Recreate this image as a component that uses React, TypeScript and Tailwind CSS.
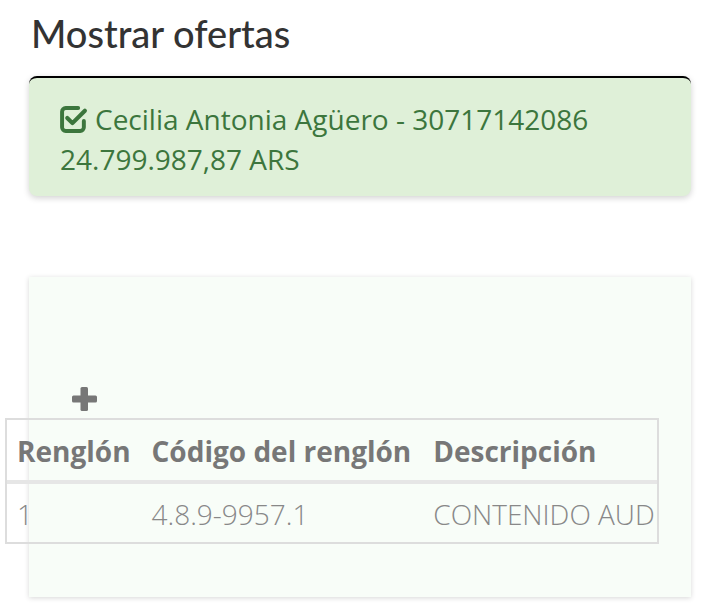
import React from 'react';

function CheckSquareIcon() {
    return (
        <svg width="28" height="27" viewBox="0 0 27 26" className="shrink-0" fill="none">
            <path
                d="M23 14.5v6a3.5 3.5 0 0 1-3.5 3.5H5.5A3.5 3.5 0 0 1 2 20.5V5.5A3.5 3.5 0 0 1 5.5 2h12"
                stroke="#3c763d"
                strokeWidth="3.8"
                strokeLinecap="round"
            />
            <path d="M7 11.5l5 5 12-12" stroke="#3c763d" strokeWidth="4" strokeLinecap="round" strokeLinejoin="round" />
        </svg>
    );
}

function PlusIcon() {
    return (
        <svg width="27" height="24" viewBox="0 0 27 24" fill="#777777">
            <rect x="2" y="8.5" width="25" height="7" rx="1.5" />
            <rect x="10.5" y="0" width="7.5" height="24" rx="1.5" />
        </svg>
    );
}

const rows = [{ renglon: '1', codigo: '4.8.9-9957.1', descripcion: 'CONTENIDO AUDIOVISUAL' }];

export default function App() {
    return (
        <div className="min-h-[603px] bg-white px-[29px] pt-[6px] pb-[6px]" style={{ fontFamily: '"Open Sans", sans-serif' }}>
            <h3
                className="pl-[2px] text-[38px] leading-[54px] font-medium text-[#333333]"
                style={{ fontFamily: 'Lato, "Open Sans", sans-serif' }}
            >
                Mostrar ofertas
            </h3>

            <div className="mt-[16px] rounded-lg border-t-2 border-black bg-[#dff0d8] pl-[31px] pr-[20px] pt-[21px] pb-[17px] text-[28px] leading-[40px] text-[#3c763d] shadow-[0_2px_6px_rgba(0,0,0,0.18)]">
                <div className="flex items-center gap-[7px]">
                    <CheckSquareIcon />
                    <span>Cecilia Antonia Agüero - 30717142086</span>
                </div>
                <div>24.799.987,87 ARS</div>
            </div>

            <div className="mt-[81px] h-[320px] bg-[#f8fdf8] pt-[110px] shadow-[0_1px_5px_rgba(0,0,0,0.16)]">
                <div className="pl-[41px]">
                    <PlusIcon />
                </div>
                <div className="-ml-[24px] mt-[7px] w-[654px] overflow-hidden border-2 border-[#dddddd]">
                    <table className="border-collapse whitespace-nowrap text-left">
                        <thead>
                            <tr className="border-b-4 border-[#e6e6e6]">
                                <th className="px-[10px] pt-[11px] pb-[9px] text-[28px] leading-[40px] font-bold text-[#777777]">Renglón</th>
                                <th className="px-[11px] pt-[11px] pb-[9px] text-[28px] leading-[40px] font-bold text-[#777777]">Código del renglón</th>
                                <th className="px-[11px] pt-[11px] pb-[9px] text-[28px] leading-[40px] font-bold text-[#777777]">Descripción</th>
                            </tr>
                        </thead>
                        <tbody>
                            {rows.map((r) => (
                                <tr key={r.codigo}>
                                    <td className="px-[10px] pt-[10px] pb-[8px] text-[28px] leading-[40px] font-light text-[#888888]">{r.renglon}</td>
                                    <td className="px-[11px] pt-[10px] pb-[8px] text-[28px] leading-[40px] font-light text-[#888888]">{r.codigo}</td>
                                    <td className="px-[11px] pt-[10px] pb-[8px] text-[28px] leading-[40px] font-light text-[#888888]">{r.descripcion}</td>
                                </tr>
                            ))}
                        </tbody>
                    </table>
                </div>
            </div>
        </div>
    );
}
